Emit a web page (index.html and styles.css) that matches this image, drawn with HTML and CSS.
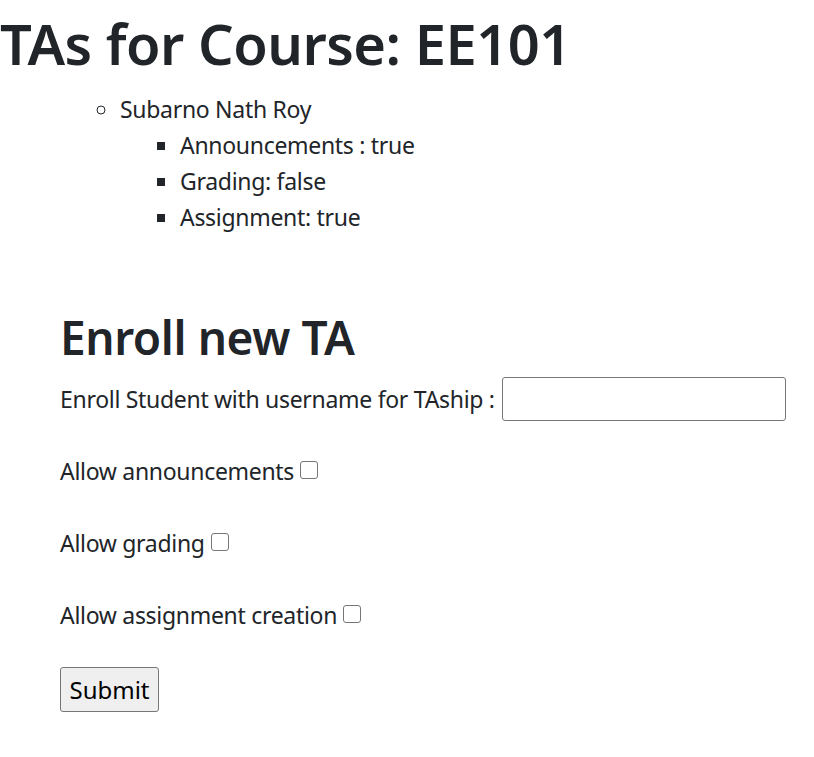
FILE: index.html
```html
<!DOCTYPE html>
<html lang="en">
<head>
<meta charset="utf-8">
<title>TAs for Course: EE101</title>
<link rel="stylesheet" href="styles.css">
</head>
<body>
<h1 class="title">TAs for Course: EE101</h1>
<ul class="outer">
  <li>
    <ul class="ta-list">
      <li>Subarno Nath Roy
        <ul class="perm-list">
          <li>Announcements : true</li>
          <li>Grading: false</li>
          <li>Assignment: true</li>
        </ul>
      </li>
    </ul>
  </li>
</ul>
<div class="enroll">
  <h2 class="enroll-title">Enroll new TA</h2>
  <form class="enroll-form">
    <div class="row">
      <label class="label" for="username">Enroll Student with username for TAship :</label>
      <input class="text-input" id="username" type="text">
    </div>
    <div class="row">
      <label class="label" for="ann">Allow announcements</label>
      <input class="check" id="ann" type="checkbox">
    </div>
    <div class="row">
      <label class="label" for="grade">Allow grading</label>
      <input class="check" id="grade" type="checkbox">
    </div>
    <div class="row">
      <label class="label" for="assign">Allow assignment creation</label>
      <input class="check" id="assign" type="checkbox">
    </div>
    <button class="submit" type="button">Submit</button>
  </form>
</div>
</body>
</html>
```
FILE: styles.css
```css
html, body {
  margin: 0;
  padding: 0;
  background: #ffffff;
}
body {
  font-family: "Noto Sans", "Open Sans", sans-serif;
  font-size: 23px;
  letter-spacing: -0.3px;
  line-height: 36px;
  color: #212529;
}
.title {
  margin: 7px 0 12px;
  font-size: 56px;
  letter-spacing: -0.5px;
  line-height: 72px;
  font-weight: 600;
}
.outer {
  list-style: none;
  margin: 0;
  padding-left: 60px;
}
.ta-list {
  list-style: circle;
  margin: 0;
  padding-left: 60px;
}
.perm-list {
  list-style: square;
  margin: 0;
  padding-left: 60px;
}
.enroll {
  padding-left: 60px;
  margin-top: 73px;
}
.enroll-title {
  margin: 0 0 15px;
  font-size: 46px;
  letter-spacing: -0.4px;
  line-height: 58px;
  font-weight: 600;
}
.enroll-form {
  margin: 0;
}
.row {
  display: flex;
  align-items: center;
  height: 36px;
  margin-bottom: 36px;
}
.row:nth-child(4) {
  margin-bottom: 34px;
}
.label {
  white-space: pre;
}
.text-input {
  box-sizing: border-box;
  width: 284px;
  height: 44px;
  margin-left: 7px;
  border: 1px solid #767676;
  border-radius: 3px;
  background: #fff;
  font: inherit;
  padding: 0 6px;
}
.check {
  appearance: none;
  -webkit-appearance: none;
  box-sizing: border-box;
  width: 18px;
  height: 18px;
  margin: -3px 0 0 6px;
  border: 1.5px solid #767676;
  border-radius: 3px;
  background: #fff;
}
.submit {
  box-sizing: border-box;
  width: 99px;
  height: 45px;
  padding: 0;
  font-family: inherit;
  font-size: 24px;
  letter-spacing: 0;
  color: #000;
  background: #efefef;
  border: 1px solid #767676;
  border-radius: 3px;
}
```
